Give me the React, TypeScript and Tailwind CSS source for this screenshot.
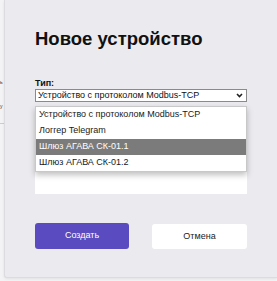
const options = [
  'Устройство с протоколом Modbus-TCP',
  'Логгер Telegram',
  'Шлюз АГАВА СК-01.1',
  'Шлюз АГАВА СК-01.2',
];

export default function App() {
  const selected = 2;

  return (
    <div className="flex h-[281px] w-[277px] overflow-hidden bg-[#f3f3f5] font-['Liberation_Sans',Arial,sans-serif] text-[#111]">
      {/* edge of the page behind the modal */}
      <div className="flex w-[4px] shrink-0 flex-col items-start pt-[79px] text-[5px] leading-[6px] text-[#333]">
        <span>ь</span>
        <span className="mt-[18px]">у</span>
        <div className="mt-[14px] h-px w-[4px] bg-[#ccc]" />
      </div>

      <div className="h-[278px] flex-1 rounded-bl-[3px] border-b border-l border-[#dcdce0] bg-[#ebebef] pl-[30px] pr-[30px] shadow-[0_1px_3px_rgba(0,0,0,0.08)]">
        <h1 className="mt-[28px] text-[18.5px] font-bold leading-[22px]">Новое устройство</h1>

        <div className="mt-[27px] w-[212px]">
          <label className="block text-[9px] font-bold leading-[12px]">Тип:</label>
          <div className="flex h-[13px] items-center justify-between border border-[#8a8a8a] bg-white pl-[2px] pr-[3px] text-[9px] leading-none">
            <span>{options[0]}</span>
            <svg width="7" height="5" viewBox="0 0 7 5" fill="none">
              <path d="M1 1l2.5 2.5L6 1" stroke="#222" strokeWidth="1.6" />
            </svg>
          </div>

          <div className="relative mt-[4px] h-[88px] bg-white">
            <ul className="absolute left-0 top-0 w-full border border-[#c8c8c8] bg-white shadow-[0_3px_6px_rgba(0,0,0,0.25)]">
              {options.map((o, i) => (
                <li
                  key={o}
                  className={
                    i === selected
                      ? 'flex h-[16px] items-center bg-[#7b7b7b] pl-[3px] text-[9px] text-white'
                      : 'flex h-[16px] items-center pl-[3px] text-[9px] text-[#1a1a1a]'
                  }
                >
                  {o}
                </li>
              ))}
            </ul>
          </div>
        </div>

        <div className="mt-[29px] flex w-[212px] justify-between">
          <button className="h-[26px] w-[94px] rounded-[3px] bg-[#5a4bc1] text-[9px] text-white">Создать</button>
          <button className="mt-px h-[25px] w-[95px] rounded-[3px] bg-white text-[9px] text-[#222]">Отмена</button>
        </div>
      </div>
    </div>
  );
}
